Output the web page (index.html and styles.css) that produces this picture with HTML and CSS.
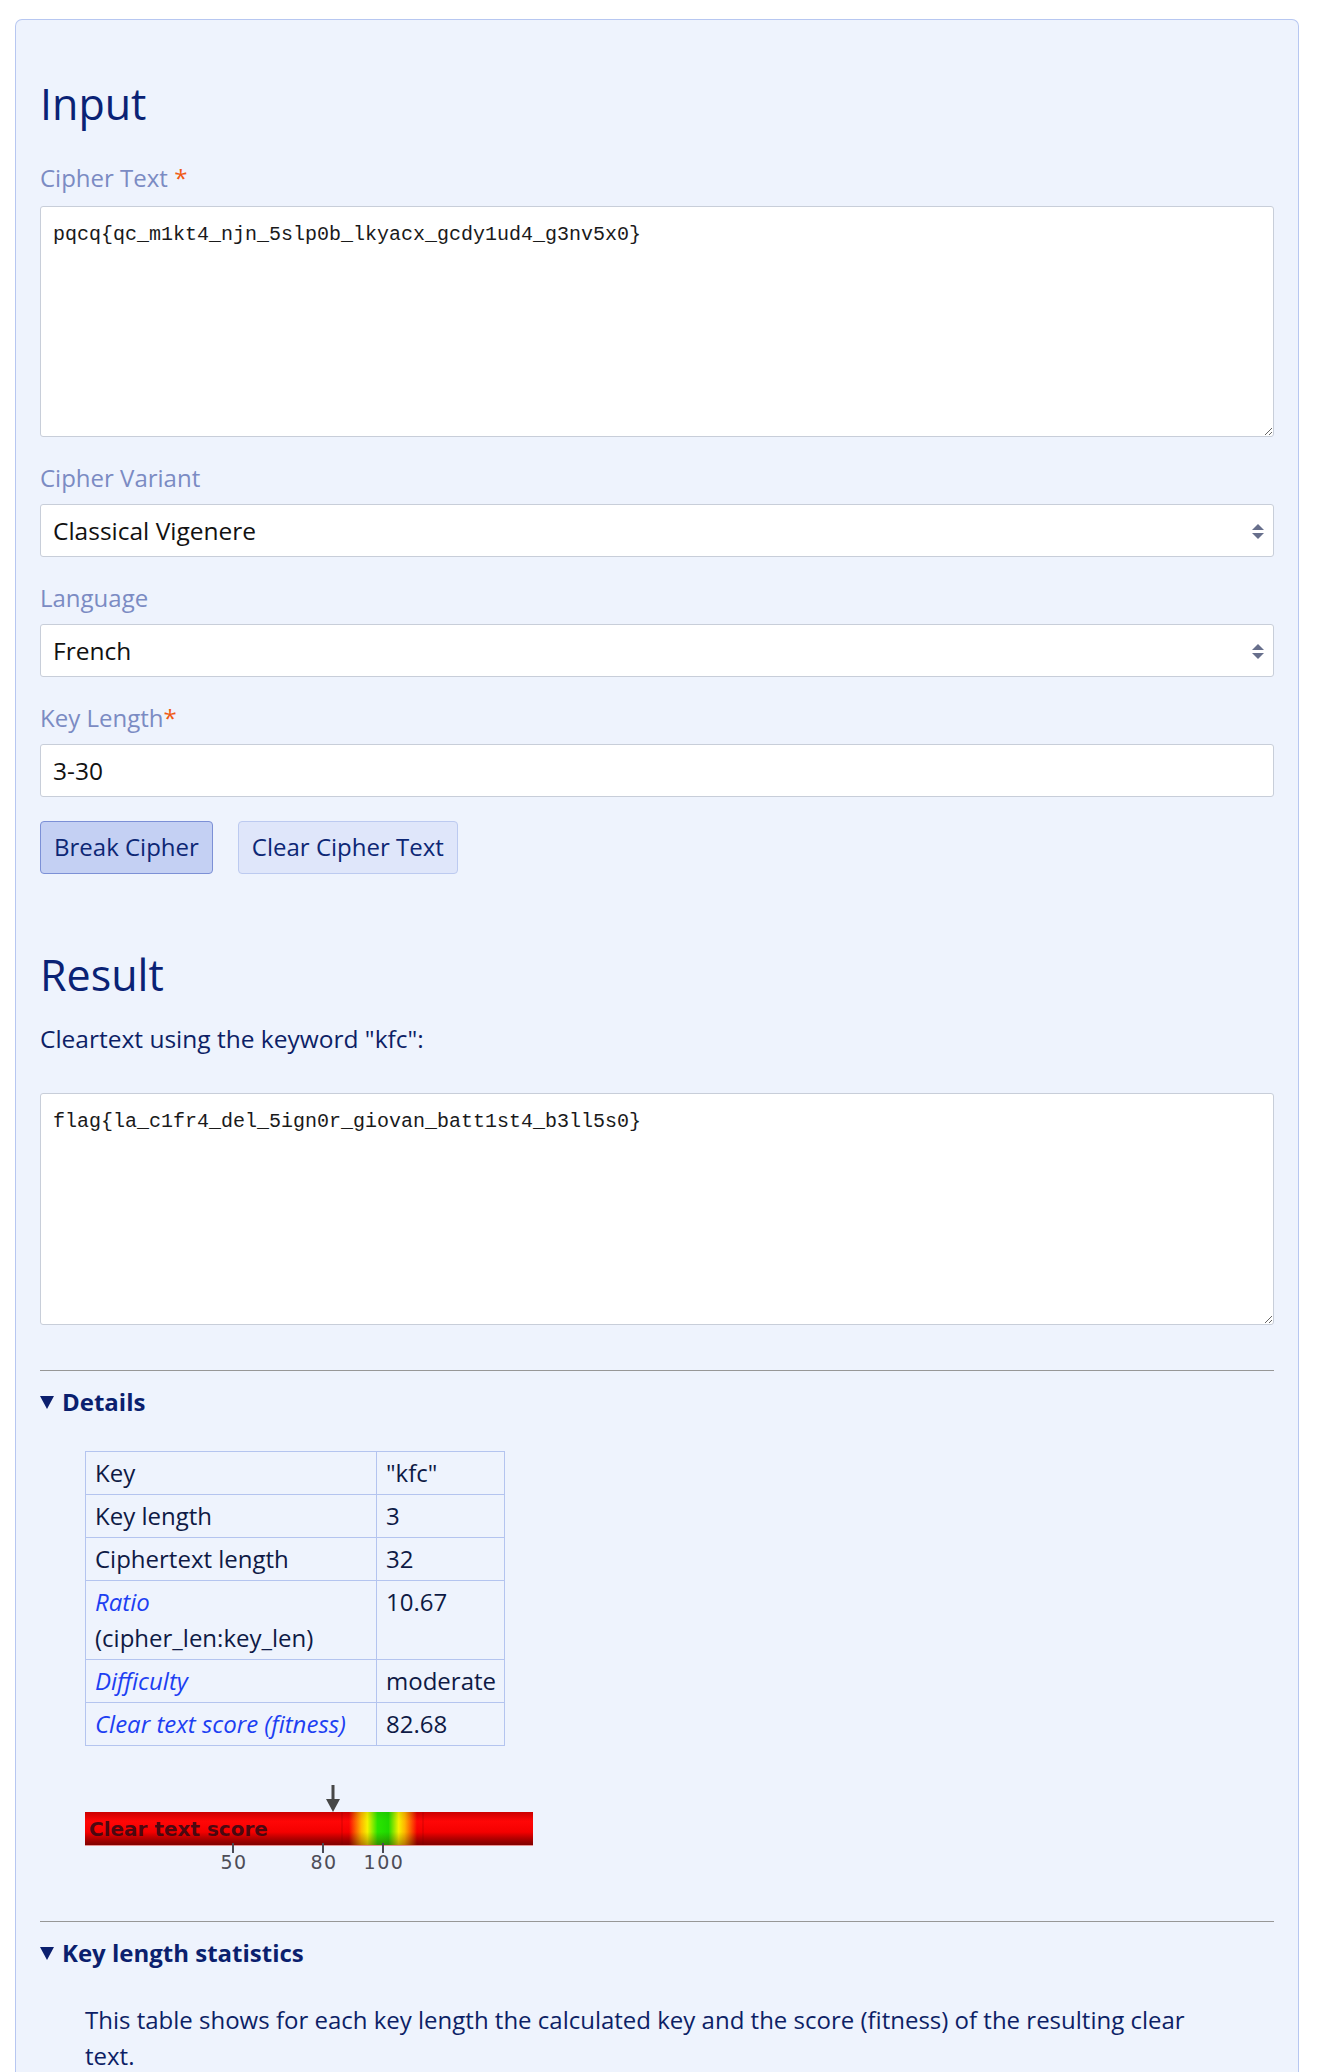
FILE: index.html
```html
<!DOCTYPE html>
<html lang="en">
<head>
<meta charset="utf-8">
<title>Vigenère Solver</title>
<link rel="stylesheet" href="styles.css">
</head>
<body>
<div class="page">
  <main class="card">
    <h2 class="heading heading-input">Input</h2>
    <form class="form">
      <div class="field field-first">
        <label class="label label-ta" for="ct">Cipher Text <span class="req">*</span></label>
        <textarea id="ct" class="textarea">pqcq{qc_m1kt4_njn_5slp0b_lkyacx_gcdy1ud4_g3nv5x0}</textarea>
      </div>
      <div class="field">
        <label class="label" for="variant">Cipher Variant</label>
        <div class="select-wrap">
          <select id="variant" class="select"><option>Classical Vigenere</option></select>
        </div>
      </div>
      <div class="field">
        <label class="label" for="lang">Language</label>
        <div class="select-wrap">
          <select id="lang" class="select"><option>French</option></select>
        </div>
      </div>
      <div class="field">
        <label class="label" for="klen">Key Length<span class="req">*</span></label>
        <input id="klen" class="input" type="text" value="3-30">
      </div>
      <div class="buttons">
        <button type="button" class="btn btn-primary">Break Cipher</button>
        <button type="button" class="btn btn-secondary">Clear Cipher Text</button>
      </div>
    </form>

    <h2 class="heading heading-result">Result</h2>
    <p class="intro">Cleartext using the keyword "kfc":</p>
    <textarea class="textarea textarea-result">flag{la_c1fr4_del_5ign0r_giovan_batt1st4_b3ll5s0}</textarea>

    <hr class="rule rule-first">
    <details class="section" open>
      <summary class="summary">Details</summary>
      <div class="section-body">
        <table class="details-table">
          <tr><td class="k">Key</td><td class="v">"kfc"</td></tr>
          <tr><td class="k">Key length</td><td class="v">3</td></tr>
          <tr><td class="k">Ciphertext length</td><td class="v">32</td></tr>
          <tr><td class="k"><a class="link" href="#">Ratio</a><br>(cipher_len:key_len)</td><td class="v">10.67</td></tr>
          <tr><td class="k"><a class="link" href="#">Difficulty</a></td><td class="v">moderate</td></tr>
          <tr><td class="k"><a class="link" href="#">Clear text score (fitness)</a></td><td class="v">82.68</td></tr>
        </table>

        <div class="score">
          <svg class="score-arrow" width="14" height="27" viewBox="0 0 14 27">
            <rect x="5.5" y="0" width="3" height="17" fill="#474747"/>
            <polygon points="0,14 14,14 7,27" fill="#474747"/>
          </svg>
          <div class="score-bar">
            <div class="score-zone"></div>
            <div class="score-stripe stripe-a"></div>
            <div class="score-stripe stripe-b"></div>
            <div class="score-shade"></div>
            <span class="score-title">Clear text score</span>
          </div>
          <div class="tick tick-50"></div>
          <div class="tick tick-80"></div>
          <div class="tick tick-100"></div>
          <span class="tick-label lbl-50">50</span>
          <span class="tick-label lbl-80">80</span>
          <span class="tick-label lbl-100">100</span>
        </div>
      </div>
    </details>

    <hr class="rule rule-second">
    <details class="section" open>
      <summary class="summary">Key length statistics</summary>
      <div class="section-body">
        <p class="stats-text">This table shows for each key length the calculated key and the score (fitness) of the resulting clear text.</p>
      </div>
    </details>
  </main>
</div>
</body>
</html>
```

FILE: styles.css
```css
* { box-sizing: border-box; }

body {
  margin: 0;
  background: #ffffff;
  font-family: "Open Sans", "Noto Sans", sans-serif;
  font-size: 24px;
  line-height: 36px;
  color: #0d1f66;
}

.page {
  padding: 19px 28px 0 15px;
}

.card {
  background: #eef3fd;
  border: 1px solid #b7c7f1;
  border-bottom: none;
  border-radius: 7px 7px 0 0;
  padding: 0 24px 240px;
}

.heading {
  margin: 0;
  font-size: 43px;
  line-height: 52px;
  font-weight: 400;
  color: #0a2275;
}

.heading-input { padding-top: 58px; }
.heading-result { margin-top: 75px; }

.form { margin: 0; }

.field { margin-top: 23px; }
.field-first { margin-top: 30px; }

.label {
  display: block;
  color: #7b8bc3;
  margin-bottom: 8px;
}
.label-ta { margin-bottom: 10px; }

.req { color: #f05a14; }

.textarea {
  display: block;
  width: 100%;
  height: 231px;
  margin: 0;
  padding: 13px 12px;
  border: 1px solid #c8ced9;
  border-radius: 3px;
  background: #ffffff;
  font-family: "Liberation Mono", "DejaVu Sans Mono", monospace;
  font-size: 20px;
  line-height: 30px;
  color: #1a1a1a;
}
.textarea-result {
  height: 232px;
  margin-top: 36px;
}

.select-wrap { position: relative; }
.select-wrap::before,
.select-wrap::after {
  content: "";
  position: absolute;
  right: 10px;
  width: 0;
  height: 0;
  border-left: 6px solid transparent;
  border-right: 6px solid transparent;
  pointer-events: none;
}
.select-wrap::before {
  top: 20px;
  border-bottom: 6px solid #676f8c;
}
.select-wrap::after {
  top: 29px;
  border-top: 6px solid #676f8c;
}

.select,
.input {
  display: block;
  width: 100%;
  height: 53px;
  margin: 0;
  padding: 0 12px;
  border: 1px solid #c8ced9;
  border-radius: 3px;
  background: #ffffff;
  font-family: inherit;
  font-size: 24.5px;
  line-height: 36px;
  color: #111111;
  -webkit-appearance: none;
  appearance: none;
}

.buttons {
  display: flex;
  gap: 25px;
  margin-top: 24px;
}

.btn {
  font-family: inherit;
  font-size: 24px;
  line-height: 36px;
  height: 53px;
  padding: 7px 13px 8px;
  border-radius: 4px;
  color: #0d2775;
  cursor: pointer;
}
.btn-primary {
  background: #c4d0f3;
  border: 1px solid #7c90d6;
}
.btn-secondary {
  background: #dfe6fa;
  border: 1px solid #bccaf0;
}

.intro {
  margin: 20px 0 0;
  font-size: 24.5px;
  color: #0d1f66;
}

.rule {
  margin: 0;
  border: none;
  border-top: 1px solid #979797;
  height: 0;
}
.rule-first { margin-top: 45px; }
.rule-second { margin-top: 46px; }

.section { margin-top: 13px; }

.summary {
  display: flex;
  align-items: center;
  list-style: none;
  font-weight: 700;
  color: #0b1f6e;
  cursor: pointer;
}
.summary::-webkit-details-marker { display: none; }
.summary::before {
  content: "";
  width: 0;
  height: 0;
  border-left: 7.5px solid transparent;
  border-right: 7.5px solid transparent;
  border-top: 13px solid #0b1f6e;
  margin-right: 8px;
}

.section-body {
  padding-left: 45px;
  margin-top: 31px;
}

.details-table {
  border-collapse: collapse;
  table-layout: fixed;
  width: 419px;
  color: #0e1a45;
}
.details-table td {
  border: 1px solid #b4c4ef;
  padding: 3px 8px 3px 9px;
  vertical-align: top;
  white-space: nowrap;
}
.details-table .k { width: 291px; }
.details-table .v { width: 128px; }

.link {
  color: #1d3ff2;
  font-style: italic;
  text-decoration: none;
}

.score {
  position: relative;
  width: 448px;
  height: 90px;
  margin-top: 39px;
}
.score-arrow {
  position: absolute;
  left: 241px;
  top: 0;
}
.score-bar {
  position: absolute;
  left: 0;
  top: 27px;
  width: 448px;
  height: 34px;
  overflow: hidden;
  background: linear-gradient(to bottom, #dc0000 0%, #ff0606 28%, #f40000 62%, #a50000 100%);
  border-bottom: 1px solid #e89090;
}
.score-zone {
  position: absolute;
  left: 264px;
  top: 0;
  width: 68px;
  height: 100%;
  background: linear-gradient(to right,
    rgba(255, 0, 0, 0) 0%,
    rgba(255, 200, 0, 0.9) 18%,
    #f6f200 27%,
    #29e400 42%,
    #1fd800 58%,
    #f6f200 73%,
    rgba(255, 200, 0, 0.9) 82%,
    rgba(255, 0, 0, 0) 100%);
}
.score-stripe {
  position: absolute;
  top: 0;
  width: 2px;
  height: 100%;
  background: rgba(140, 0, 0, 0.18);
}
.stripe-a { left: 256px; }
.stripe-b { left: 337px; }
.score-shade {
  position: absolute;
  inset: 0;
  background: linear-gradient(to bottom, rgba(0, 0, 0, 0.08) 0%, rgba(0, 0, 0, 0) 28%, rgba(0, 0, 0, 0) 60%, rgba(60, 0, 0, 0.35) 100%);
}
.score-title {
  position: absolute;
  left: 4px;
  top: 5px;
  font-family: "DejaVu Sans", sans-serif;
  font-weight: 700;
  font-size: 20px;
  line-height: 24px;
  color: rgba(45, 10, 20, 0.85);
  white-space: nowrap;
}
.tick {
  position: absolute;
  top: 58px;
  width: 2px;
  height: 10px;
  background: #4a4a55;
}
.tick-50 { left: 147px; }
.tick-80 { left: 237px; }
.tick-100 { left: 297px; }
.tick-label {
  position: absolute;
  top: 67px;
  font-family: "DejaVu Sans", sans-serif;
  font-size: 19px;
  line-height: 20px;
  letter-spacing: 1.5px;
  color: #4d4d58;
  transform: translateX(-50%);
  white-space: nowrap;
}
.lbl-50 { left: 149px; }
.lbl-80 { left: 239px; }
.lbl-100 { left: 299px; }

.stats-text {
  margin: 0;
  padding-right: 70px;
  color: #0d1f66;
}
```
